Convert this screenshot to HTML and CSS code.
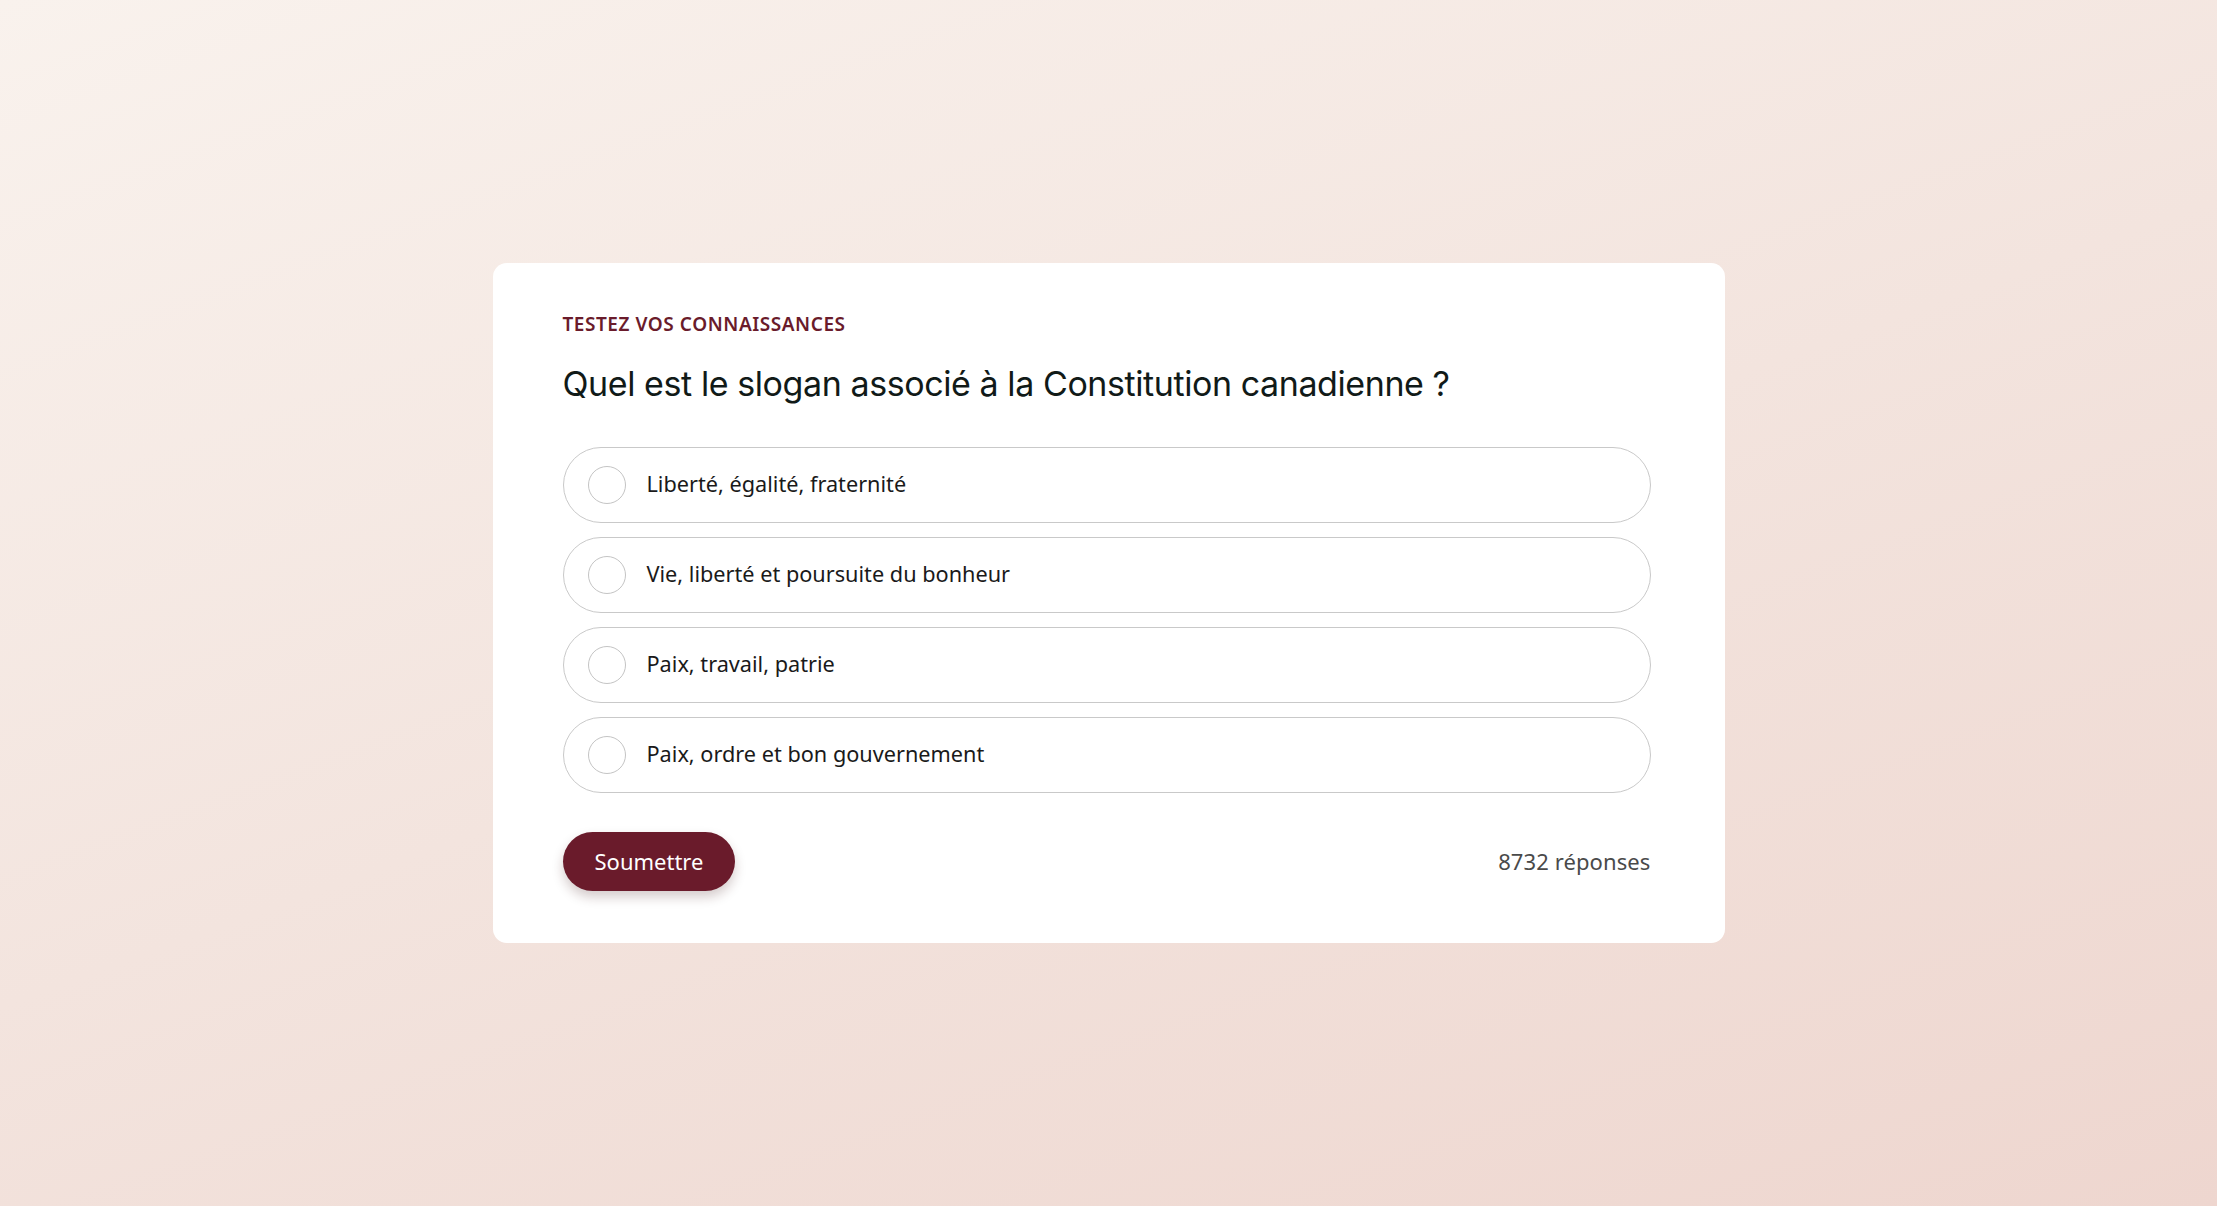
FILE: index.html
```html
<!DOCTYPE html>
<html lang="fr">
<head>
<meta charset="utf-8">
<title>Testez vos connaissances</title>
<link rel="stylesheet" href="styles.css">
</head>
<body>
<main class="page">
  <section class="card">
    <p class="eyebrow">TESTEZ VOS CONNAISSANCES</p>
    <h1 class="question">Quel est le slogan associé à la Constitution canadienne ?</h1>
    <ul class="options">
      <li class="option"><span class="radio"></span><span class="option-text">Liberté, égalité, fraternité</span></li>
      <li class="option"><span class="radio"></span><span class="option-text">Vie, liberté et poursuite du bonheur</span></li>
      <li class="option"><span class="radio"></span><span class="option-text">Paix, travail, patrie</span></li>
      <li class="option"><span class="radio"></span><span class="option-text">Paix, ordre et bon gouvernement</span></li>
    </ul>
    <div class="footer">
      <button class="submit" type="button">Soumettre</button>
      <span class="count">8732 réponses</span>
    </div>
  </section>
</main>
</body>
</html>
```
FILE: styles.css
```css
* { box-sizing: border-box; }
html, body { margin: 0; padding: 0; height: 100%; }
body {
  background: linear-gradient(160deg, #f9f2ed 0%, #f3e4de 50%, #eed6cf 100%);
  font-family: "Noto Sans", "Liberation Sans", sans-serif;
}
.page {
  height: 100vh;
  display: flex;
  align-items: center;
  justify-content: center;
}
.card {
  width: 1232px;
  background: #ffffff;
  border-radius: 14px;
  padding: 49px 74px 52px 70px;
}
.eyebrow {
  margin: 0;
  font-size: 19px;
  line-height: 24px;
  font-weight: 600;
  color: #6a1b2b;
  letter-spacing: 0.55px;
}
.question {
  margin: 27px 0 0;
  font-family: Inter, "Noto Sans", sans-serif;
  font-size: 34px;
  line-height: 42px;
  font-weight: 400;
  color: #111a18;
  letter-spacing: -0.42px;
}
.options {
  list-style: none;
  margin: 42px 0 0;
  padding: 0;
  display: flex;
  flex-direction: column;
  gap: 13.7px;
}
.option {
  height: 76px;
  border: 1.5px solid #c9c9c9;
  border-radius: 38px;
  display: flex;
  align-items: center;
  padding-left: 24px;
  gap: 21px;
}
.radio {
  width: 38px;
  height: 38px;
  border-radius: 50%;
  border: 1.5px solid #c4c4c4;
  flex: none;
}
.option-text {
  font-size: 21.7px;
  color: #1a1a1a;
  margin-bottom: 3px;
}
.footer {
  margin-top: 39px;
  display: flex;
  align-items: center;
  justify-content: space-between;
}
.submit {
  height: 59px;
  padding: 0 32px;
  border: none;
  border-radius: 30px;
  background: #6a1b2b;
  color: #ffffff;
  font-family: "Noto Sans", sans-serif;
  font-size: 22px;
  box-shadow: 0 6px 12px rgba(60, 20, 20, 0.22);
}
.count {
  font-size: 22px;
  color: #4a4a4a;
  letter-spacing: 0.1px;
}
```
